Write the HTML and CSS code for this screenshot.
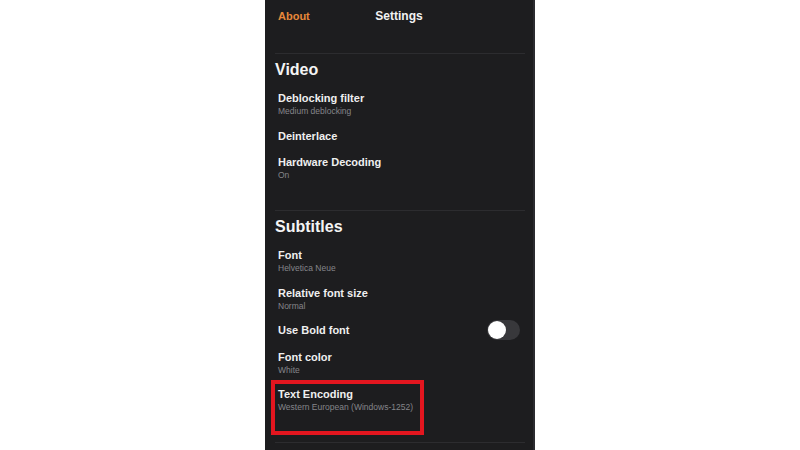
FILE: index.html
```html
<!DOCTYPE html>
<html>
<head>
<meta charset="utf-8">
<link rel="stylesheet" href="styles.css">
</head>
<body>
<div class="page">
  <div class="phone">
    <div class="header">
      <span class="back">About</span>
      <span class="title">Settings</span>
      <span></span>
    </div>
    <section class="section first">
      <h2 class="section-title">Video</h2>
      <div class="row">
        <div class="row-title">Deblocking filter</div>
        <div class="row-sub">Medium deblocking</div>
      </div>
      <div class="row">
        <div class="row-title">Deinterlace</div>
      </div>
      <div class="row">
        <div class="row-title">Hardware Decoding</div>
        <div class="row-sub">On</div>
      </div>
    </section>
    <section class="section last">
      <h2 class="section-title">Subtitles</h2>
      <div class="row">
        <div class="row-title">Font</div>
        <div class="row-sub">Helvetica Neue</div>
      </div>
      <div class="row">
        <div class="row-title">Relative font size</div>
        <div class="row-sub">Normal</div>
      </div>
      <div class="row row-switch">
        <div class="row-title">Use Bold font</div>
        <div class="switch"><div class="knob"></div></div>
      </div>
      <div class="row">
        <div class="row-title">Font color</div>
        <div class="row-sub">White</div>
      </div>
      <div class="row highlighted">
        <div class="row-title">Text Encoding</div>
        <div class="row-sub">Western European (Windows-1252)</div>
      </div>
    </section>
  </div>
</div>
</body>
</html>
```
FILE: styles.css
```css
* { box-sizing: border-box; }
html, body { margin: 0; padding: 0; background: #ffffff; }
body { font-family: "Liberation Sans", Arial, sans-serif; }

.page {
  width: 800px;
  height: 450px;
  display: flex;
  justify-content: center;
  overflow: hidden;
}

.phone {
  width: 270px;
  height: 450px;
  background: #1d1d1f;
  border-right: 2px solid #2b2b2f;
  display: flex;
  flex-direction: column;
}

.header {
  height: 32px;
  margin-bottom: 21px;
  display: grid;
  grid-template-columns: 1fr auto 1fr;
  align-items: center;
  padding: 0 13px;
}
.back {
  color: #e8883a;
  font-size: 11px;
  font-weight: bold;
}
.title {
  color: #f2f2f2;
  font-size: 12px;
  font-weight: bold;
}

.section {
  margin: 0 8px 0 10px;
  border-top: 1px solid #2c2c2f;
  padding-top: 6px;
}
.section.first { padding-bottom: 23.75px; }
.section.last {
  padding-bottom: 23.75px;
  border-bottom: 1px solid #2c2c2f;
}

.section-title {
  margin: 0 0 4.75px 0;
  height: 20px;
  line-height: 20px;
  font-size: 16px;
  font-weight: bold;
  color: #f4f4f4;
}

.row {
  padding: 6.25px 0 6.25px 3px;
  position: relative;
}
.row-title {
  height: 14px;
  line-height: 14px;
  font-size: 11px;
  font-weight: bold;
  color: #efefef;
}
.row-sub {
  margin-top: 1px;
  height: 10px;
  line-height: 10px;
  font-size: 8.5px;
  color: #85858a;
}

.row-switch {
  display: flex;
  align-items: center;
  justify-content: space-between;
  padding-right: 5px;
}
.switch {
  width: 33px;
  height: 20px;
  margin: -3px 0 -3px 0;
  border-radius: 10px;
  background: #38383b;
  padding: 1px;
}
.knob {
  width: 18px;
  height: 18px;
  border-radius: 50%;
  background: #ffffff;
}

.highlighted::after {
  content: "";
  position: absolute;
  left: -4px;
  top: -1px;
  width: 145px;
  height: 47px;
  border: 4px solid #e3161f;
}
```
